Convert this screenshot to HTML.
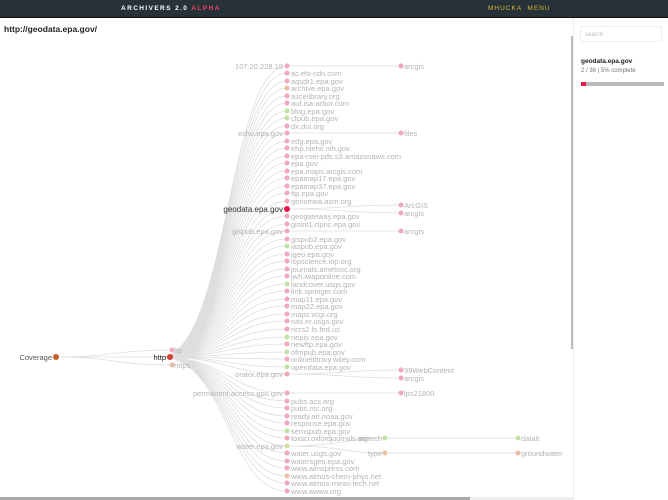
<!DOCTYPE html>
<html><head><meta charset="utf-8"><style>
body{margin:0;width:668px;height:500px;overflow:hidden;background:#fff;font-family:"Liberation Sans",sans-serif;position:relative}
.hdr{position:absolute;left:0;top:0;width:668px;height:17px;background:#263238;border-bottom:1px solid #111}
.t{position:absolute;top:5px;font-size:6.5px;font-weight:bold;letter-spacing:1.4px;color:#fff}
.side{position:absolute;left:573px;top:18px;width:95px;height:482px;background:#fff;border-left:1px solid #eee}
.srch{position:absolute;left:580px;top:26px;width:82px;height:16px;border:1px solid #eee;border-radius:2px;font-size:6px;color:#bbb;line-height:16px;padding-left:4px;box-sizing:border-box}
</style></head><body>
<div class="hdr"></div>
<div class="t" style="left:121px">ARCHIVERS 2.0 <span style="color:#f0406a">ALPHA</span></div>
<div class="t" style="left:488px;color:#d8b43a;font-weight:normal;letter-spacing:1px">MHUCKA &nbsp;MENU</div>
<div style="position:absolute;left:4px;top:24px;font-size:8.5px;font-weight:bold;color:#222">http://geodata.epa.gov/</div>
<div style="position:absolute;left:571px;top:36px;width:3px;height:313px;background:#bbb"></div>
<div style="position:absolute;left:0;top:497px;width:470px;height:3px;background:#aaa"></div>
<div style="position:absolute;left:470px;top:497px;width:198px;height:3px;background:#eee"></div>
<div class="side"></div>
<div class="srch">search</div>
<div style="position:absolute;left:581px;top:58px;font-size:6.5px;font-weight:bold;color:#222">geodata.epa.gov</div>
<div style="position:absolute;left:581px;top:68px;font-size:6px;color:#777">2 / 36 | 5% complete</div>
<div style="position:absolute;left:581px;top:82px;width:83px;height:4px;background:#bbb"></div>
<div style="position:absolute;left:581px;top:82px;width:5px;height:4px;background:#e8174a"></div>
<svg width="668" height="500" style="position:absolute;left:0;top:0" font-family="Liberation Sans, sans-serif" font-size="7.5">
<g fill="none" stroke="#dedede" stroke-width="0.8">
<path d="M56 357C114 357 114 350 172 350M56 357C114 357 114 357 158 357M56 357C114 357 114 365 172 365"/>
<path d="M160 357C228 357 228 66 287 66M160 357C228 357 228 73 287 73M160 357C228 357 228 81 287 81M160 357C228 357 228 88 287 88M160 357C228 357 228 96 287 96M160 357C228 357 228 103 287 103M160 357C228 357 228 111 287 111M160 357C228 357 228 118 287 118M160 357C228 357 228 126 287 126M160 357C228 357 228 133 287 133M160 357C228 357 228 141 287 141M160 357C228 357 228 148 287 148M160 357C228 357 228 156 287 156M160 357C228 357 228 163 287 163M160 357C228 357 228 171 287 171M160 357C228 357 228 178 287 178M160 357C228 357 228 186 287 186M160 357C228 357 228 193 287 193M160 357C228 357 228 201 287 201M160 357C228 357 228 209 287 209M160 357C228 357 228 216 287 216M160 357C228 357 228 224 287 224M160 357C228 357 228 231 287 231M160 357C228 357 228 239 287 239M160 357C228 357 228 246 287 246M160 357C228 357 228 254 287 254M160 357C228 357 228 261 287 261M160 357C228 357 228 269 287 269M160 357C228 357 228 276 287 276M160 357C228 357 228 284 287 284M160 357C228 357 228 291 287 291M160 357C228 357 228 299 287 299M160 357C228 357 228 306 287 306M160 357C228 357 228 314 287 314M160 357C228 357 228 321 287 321M160 357C228 357 228 329 287 329M160 357C228 357 228 337 287 337M160 357C228 357 228 344 287 344M160 357C228 357 228 352 287 352M160 357C228 357 228 359 287 359M160 357C228 357 228 367 287 367M160 357C228 357 228 374 287 374M160 357C228 357 228 393 287 393M160 357C228 357 228 401 287 401M160 357C228 357 228 408 287 408M160 357C228 357 228 416 287 416M160 357C228 357 228 423 287 423M160 357C228 357 228 431 287 431M160 357C228 357 228 438 287 438M160 357C228 357 228 446 287 446M160 357C228 357 228 453 287 453M160 357C228 357 228 461 287 461M160 357C228 357 228 468 287 468M160 357C228 357 228 476 287 476M160 357C228 357 228 483 287 483M160 357C228 357 228 491 287 491"/>
<path d="M287 66H401M287 133H401M287 209C344 209 344 205 401 205M287 209C344 209 344 213 401 213M287 231H401M287 374C344 374 344 370 401 370M287 374C344 374 344 378 401 378M287 393H401M287 446C344 446 344 438 385 438H518M287 446C344 446 344 453 385 453H518"/>
</g>
<g fill="#b4b4b4">
<text x="283" y="69" text-anchor="end">107.20.228.18</text>
<text x="283" y="136" text-anchor="end">echo.epa.gov</text>
<text x="283" y="234" text-anchor="end">gispub.epa.gov</text>
<text x="283" y="377" text-anchor="end">orator.epa.gov</text>
<text x="283" y="396" text-anchor="end">permanent.access.gpo.gov</text>
<text x="283" y="449" text-anchor="end">water.epa.gov</text>
<text x="382" y="441" text-anchor="end">scitech</text>
<text x="382" y="456" text-anchor="end">type</text>
<text x="174" y="353">ftp</text><text x="174" y="368">https</text>
<text x="404" y="69">arcgis</text><text x="404" y="136">files</text><text x="404" y="208">ArcGIS</text><text x="404" y="216">arcgis</text><text x="404" y="234">arcgis</text><text x="404" y="373">99WebContent</text><text x="404" y="381">arcgis</text><text x="404" y="396">lps21800</text><text x="521" y="441">datait</text><text x="521" y="456">groundwater</text>
<text x="291" y="76">ac.els-cdn.com</text><text x="291" y="84">aqsdr1.epa.gov</text><text x="291" y="91">archive.epa.gov</text><text x="291" y="99">ascelibrary.org</text><text x="291" y="106">auf.isa-arbor.com</text><text x="291" y="114">blog.epa.gov</text><text x="291" y="121">cfpub.epa.gov</text><text x="291" y="129">dx.doi.org</text><text x="291" y="144">edg.epa.gov</text><text x="291" y="151">ehp.niehs.nih.gov</text><text x="291" y="159">epa-rsei-pds.s3.amazonaws.com</text><text x="291" y="166">epa.gov</text><text x="291" y="174">epa.maps.arcgis.com</text><text x="291" y="181">epamap17.epa.gov</text><text x="291" y="189">epamap37.epa.gov</text><text x="291" y="196">ftp.epa.gov</text><text x="291" y="204">genomea.asm.org</text><text x="291" y="219">geogateway.epa.gov</text><text x="291" y="227">gisint1.rtpnc.epa.gov</text><text x="291" y="242">gispub2.epa.gov</text><text x="291" y="249">iaspub.epa.gov</text><text x="291" y="257">igeo.epa.gov</text><text x="291" y="264">iopscience.iop.org</text><text x="291" y="272">journals.ametsoc.org</text><text x="291" y="279">jwh.iwaponline.com</text><text x="291" y="287">landcover.usgs.gov</text><text x="291" y="294">link.springer.com</text><text x="291" y="302">map11.epa.gov</text><text x="291" y="309">map22.epa.gov</text><text x="291" y="317">maps.vcgi.org</text><text x="291" y="324">nas.er.usgs.gov</text><text x="291" y="332">ncrs2.fs.fed.us</text><text x="291" y="340">nepis.epa.gov</text><text x="291" y="347">newftp.epa.gov</text><text x="291" y="355">ofmpub.epa.gov</text><text x="291" y="362">onlinelibrary.wiley.com</text><text x="291" y="370">opendata.epa.gov</text><text x="291" y="404">pubs.acs.org</text><text x="291" y="411">pubs.rsc.org</text><text x="291" y="419">ready.arl.noaa.gov</text><text x="291" y="426">response.epa.gov</text><text x="291" y="434">semspub.epa.gov</text><text x="291" y="441" textLength="77">toxsci.oxfordjournals.org</text><text x="291" y="456">water.usgs.gov</text><text x="291" y="464">watersgeo.epa.gov</text><text x="291" y="471">www.aimspress.com</text><text x="291" y="479">www.atmos-chem-phys.net</text><text x="291" y="486">www.atmos-meas-tech.net</text><text x="291" y="494">www.awwa.org</text>
</g>
<text x="283" y="212" text-anchor="end" fill="#333" font-size="8">geodata.epa.gov</text>
<text x="52" y="360" text-anchor="end" fill="#555" font-size="7.5">Coverage</text>
<text x="166" y="360" text-anchor="end" fill="#222" font-size="7.5">http</text>
<g fill="#f4a7b9">
<circle cx="287" cy="66" r="2.5"/><circle cx="287" cy="73" r="2.5"/><circle cx="287" cy="81" r="2.5"/><circle cx="287" cy="96" r="2.5"/><circle cx="287" cy="103" r="2.5"/><circle cx="287" cy="126" r="2.5"/><circle cx="287" cy="133" r="2.5"/><circle cx="287" cy="141" r="2.5"/><circle cx="287" cy="148" r="2.5"/><circle cx="287" cy="156" r="2.5"/><circle cx="287" cy="163" r="2.5"/><circle cx="287" cy="171" r="2.5"/><circle cx="287" cy="178" r="2.5"/><circle cx="287" cy="186" r="2.5"/><circle cx="287" cy="193" r="2.5"/><circle cx="287" cy="201" r="2.5"/><circle cx="287" cy="216" r="2.5"/><circle cx="287" cy="224" r="2.5"/><circle cx="287" cy="231" r="2.5"/><circle cx="287" cy="239" r="2.5"/><circle cx="287" cy="254" r="2.5"/><circle cx="287" cy="261" r="2.5"/><circle cx="287" cy="269" r="2.5"/><circle cx="287" cy="276" r="2.5"/><circle cx="287" cy="291" r="2.5"/><circle cx="287" cy="299" r="2.5"/><circle cx="287" cy="306" r="2.5"/><circle cx="287" cy="314" r="2.5"/><circle cx="287" cy="321" r="2.5"/><circle cx="287" cy="329" r="2.5"/><circle cx="287" cy="344" r="2.5"/><circle cx="287" cy="359" r="2.5"/><circle cx="287" cy="374" r="2.5"/><circle cx="287" cy="393" r="2.5"/><circle cx="287" cy="401" r="2.5"/><circle cx="287" cy="408" r="2.5"/><circle cx="287" cy="416" r="2.5"/><circle cx="287" cy="423" r="2.5"/><circle cx="287" cy="438" r="2.5"/><circle cx="287" cy="453" r="2.5"/><circle cx="287" cy="461" r="2.5"/><circle cx="287" cy="468" r="2.5"/><circle cx="287" cy="483" r="2.5"/><circle cx="287" cy="491" r="2.5"/>
<circle cx="401" cy="66" r="2.5"/><circle cx="401" cy="133" r="2.5"/><circle cx="401" cy="205" r="2.5"/><circle cx="401" cy="213" r="2.5"/><circle cx="401" cy="231" r="2.5"/><circle cx="401" cy="370" r="2.5"/><circle cx="401" cy="378" r="2.5"/><circle cx="401" cy="393" r="2.5"/><circle cx="172" cy="350" r="2.5"/>
</g>
<g fill="#c5e1a5">
<circle cx="287" cy="111" r="2.5"/><circle cx="287" cy="118" r="2.5"/><circle cx="287" cy="246" r="2.5"/><circle cx="287" cy="284" r="2.5"/><circle cx="287" cy="337" r="2.5"/><circle cx="287" cy="352" r="2.5"/><circle cx="287" cy="367" r="2.5"/><circle cx="287" cy="431" r="2.5"/><circle cx="287" cy="446" r="2.5" fill="#d4dca0"/><circle cx="385" cy="438" r="2.5"/><circle cx="518" cy="438" r="2.5"/>
</g>
<g fill="#e8bfa8">
<circle cx="287" cy="88" r="2.5"/><circle cx="287" cy="476" r="2.5"/><circle cx="385" cy="453" r="2.5"/><circle cx="518" cy="453" r="2.5"/><circle cx="172" cy="365" r="2.5"/>
</g>
<circle cx="287" cy="209" r="3" fill="#e8174a"/>
<circle cx="170" cy="357" r="3" fill="#d0402a"/>
<circle cx="56" cy="357" r="3" fill="#c8602a"/>
</svg>
</body></html>
